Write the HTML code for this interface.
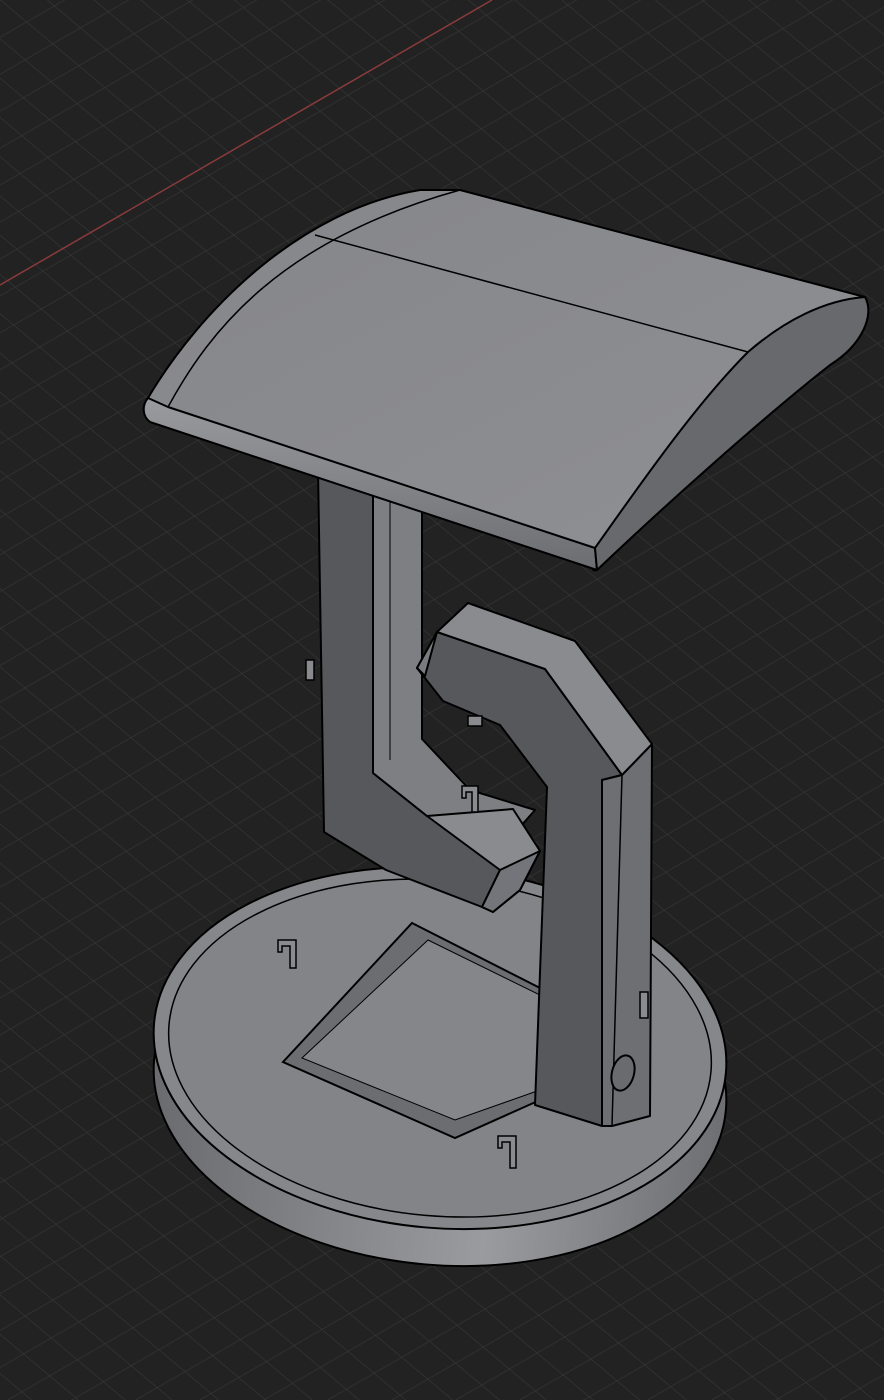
<!DOCTYPE html>
<html><head><meta charset="utf-8"><style>
html,body{margin:0;padding:0;background:#202020;}
svg{display:block}
</style></head><body>
<svg width="884" height="1400" viewBox="0 0 884 1400" xmlns="http://www.w3.org/2000/svg">
<defs>
<pattern id="g" width="32" height="32" patternUnits="userSpaceOnUse" patternTransform="rotate(-30) skewX(20)">
<rect width="32" height="32" fill="#222"/>
<path d="M0 0H32M0 0V32" stroke="#383838" stroke-width="1.2" fill="none"/>
</pattern>
<linearGradient id="disc" x1="0" x2="1" y1="0" y2="0">
<stop offset="0" stop-color="#6a6b6f"/><stop offset="0.6" stop-color="#9a9b9f"/><stop offset="1" stop-color="#6e6f73"/>
</linearGradient>
<linearGradient id="top" x1="0" x2="1" y1="0" y2="1">
<stop offset="0" stop-color="#85868a"/><stop offset="1" stop-color="#8f9094"/>
</linearGradient>
<linearGradient id="front" x1="0" x2="0" y1="0" y2="1">
<stop offset="0" stop-color="#9a9b9f"/><stop offset="1" stop-color="#6c6d71"/>
</linearGradient>
</defs>
<rect width="884" height="1400" fill="url(#g)"/>
<line x1="0" y1="285" x2="492" y2="0" stroke="#8a3b3b" stroke-width="1.5"/>

<!-- base disc -->
<g stroke="#000" stroke-width="2">
<ellipse cx="440" cy="1085" rx="287" ry="180" transform="rotate(5 440 1085)" fill="url(#disc)"/>
<ellipse cx="440" cy="1048" rx="287" ry="180" transform="rotate(5 440 1048)" fill="#86878b"/>
<ellipse cx="440" cy="1048" rx="272" ry="168" transform="rotate(5 440 1048)" fill="#838488" stroke-width="1.5"/>
<polygon points="412,923 540,988 540,1100 455,1138 283,1062" fill="#6c6d71"/>
<polygon points="428,940 540,995 540,1090 455,1120 302,1058" fill="#85868a" stroke-width="1"/>
</g>

<!-- left pillar -->
<g stroke="#000" stroke-width="2" stroke-linejoin="round">
<polygon points="318,470 373,480 373,773 427,816 520,840 482,907 386,870 324,832" fill="#57585c"/>
<polygon points="373,480 422,490 422,739 470,790 535,810 513,835 427,816 373,773" fill="#7e7f83"/>
<line x1="390" y1="485" x2="390" y2="760" stroke-width="1"/>
<polygon points="427,816 513,809 540,851 520,890 493,912 482,907 500,870" fill="#8a8b8f"/>
<polygon points="482,907 500,870 540,851 520,890 493,912" fill="#74757a"/>
</g>

<!-- right arm -->
<g stroke="#000" stroke-width="2" stroke-linejoin="round">
<polygon points="437,632 545,669 622,775 602,780 602,1126 535,1105 547,787 500,725 443,701 417,668" fill="#57585c"/>
<polygon points="622,775 652,744 650,1116 612,1126 602,1126 602,780" fill="#6e6f73"/>
<line x1="622" y1="775" x2="612" y2="1126" stroke-width="1.5"/>
<polygon points="468,603 575,641 652,744 622,775 545,669 437,632" fill="#8a8b8f"/>
<polygon points="437,632 417,668 425,676" fill="#7a7b7f"/>
<ellipse cx="623" cy="1073" rx="11" ry="18" transform="rotate(15 623 1073)" fill="#6a6b6f"/>
</g>

<!-- clips -->
<g stroke="#000" stroke-width="1.5" fill="#8a8b8f">
<path d="M278 940 h18 v28 h-6 v-22 h-8 v6 h-4z"/>
<path d="M498 1136 h18 v32 h-6 v-26 h-8 v6 h-4z"/>
<path d="M462 786 h16 v26 h-6 v-20 h-6 v6 h-4z"/>
<path d="M306 660 h8 v20 h-8z"/>
<path d="M468 716 h14 v10 h-14z"/>
<path d="M640 992 h8 v26 h-8z"/>
</g>

<!-- canopy -->
<g stroke="#000" stroke-width="2" stroke-linejoin="round">
<path d="M148,398 C200,310 300,210 420,190 L460,190 L865,297 C875,315 862,345 830,365 C760,420 660,510 597,570 C590,572 592,566 595,550 L150,420 C142,415 142,405 148,398 Z" fill="url(#top)"/>
<path d="M148,398 L168,407 L595,548 L597,570 L150,422 C142,416 142,405 148,398 Z" fill="url(#front)"/>
<path d="M865,297 C875,315 862,345 830,365 C760,420 660,510 597,570 L595,548 C650,470 700,400 748,352 C785,320 825,300 865,297 Z" fill="#68696d"/>
<path d="M168,407 C210,330 280,240 460,190" fill="none" stroke-width="1.5"/>
<line x1="315" y1="235" x2="748" y2="352" stroke-width="1.5"/>
</g>
</svg>
</body></html>
